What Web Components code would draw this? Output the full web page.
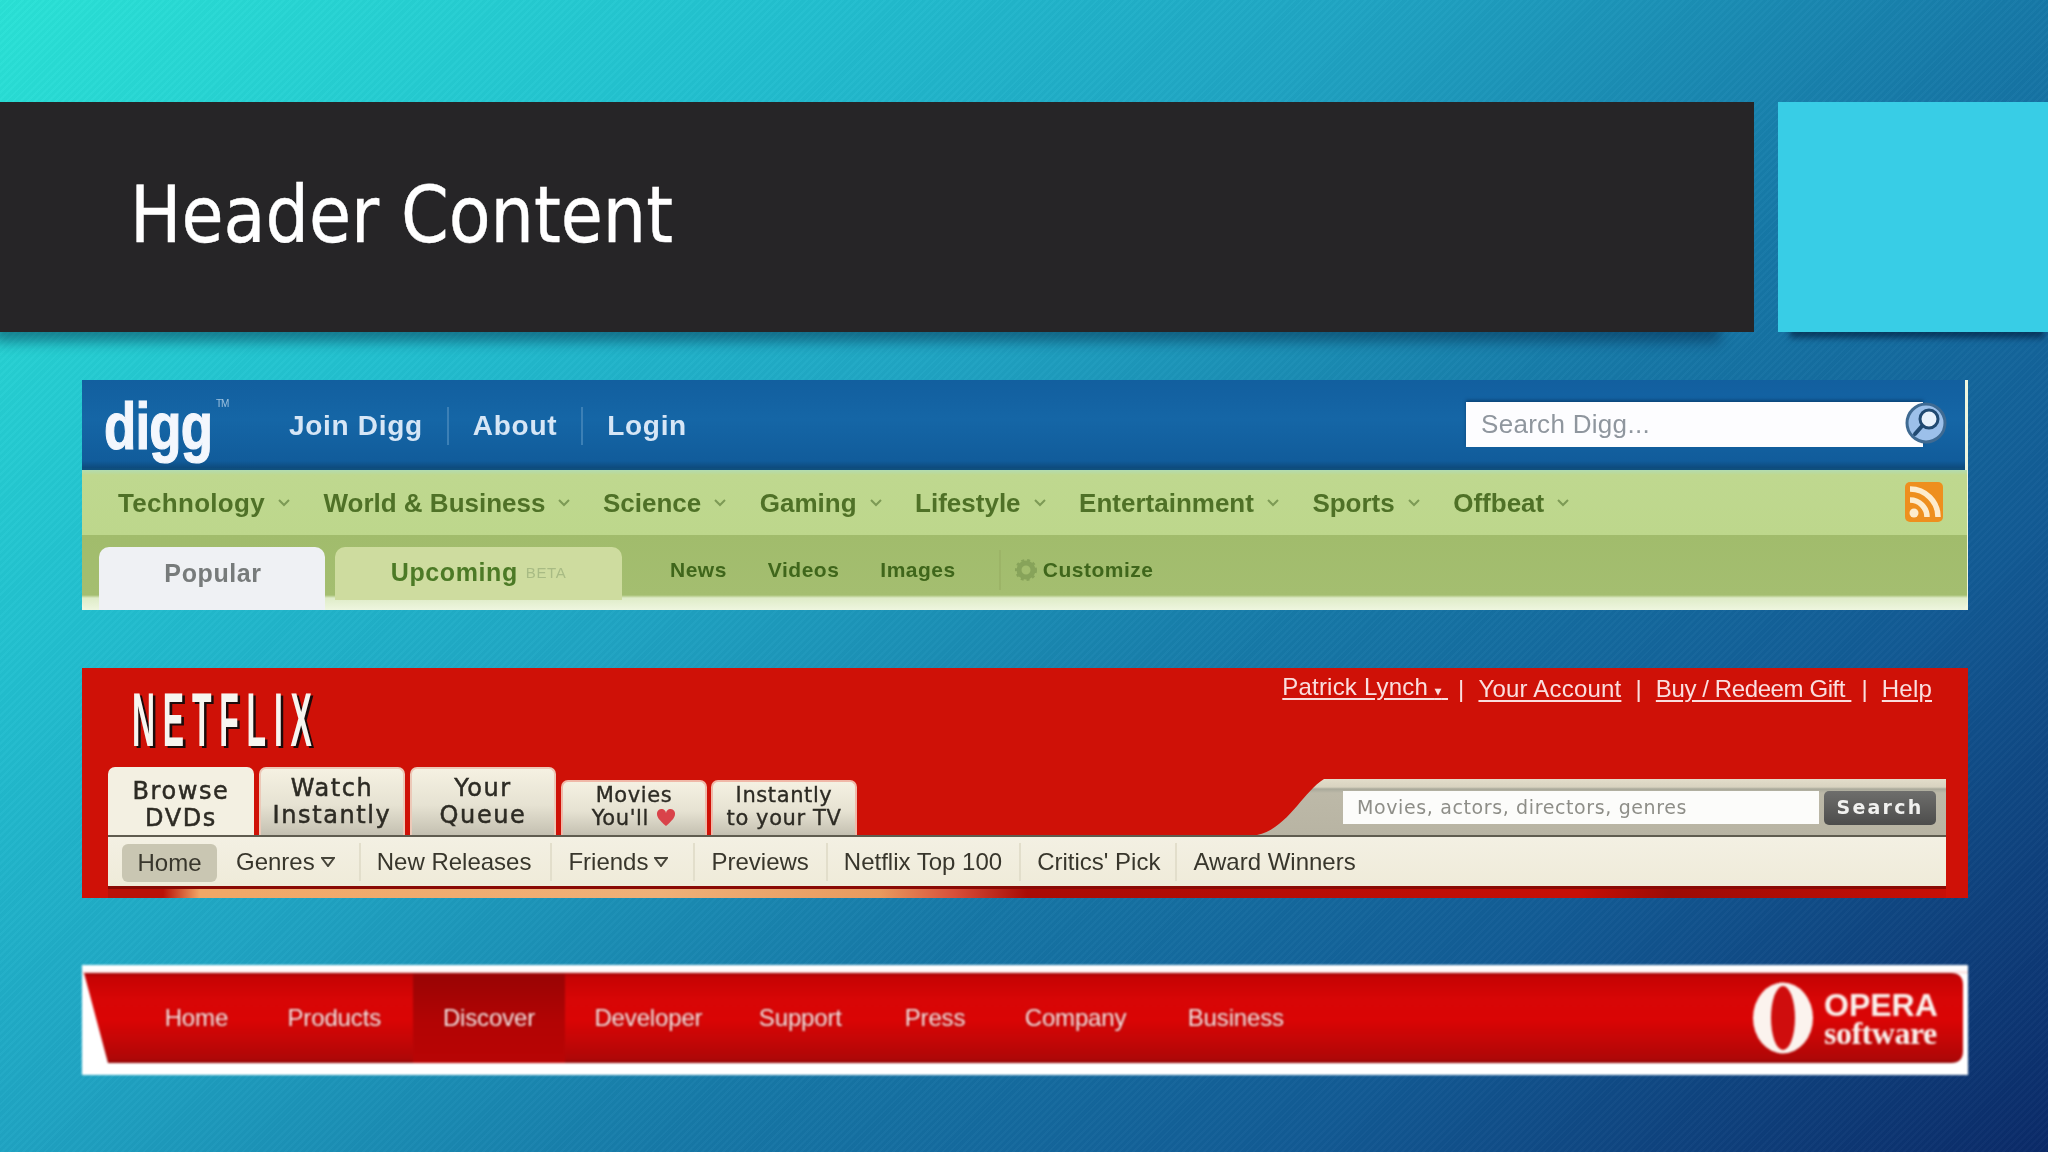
<!DOCTYPE html>
<html><head><meta charset="utf-8"><title>Header Content</title>
<style>
html,body{margin:0;padding:0;width:2048px;height:1152px;overflow:hidden}
body{font-family:"Liberation Sans",sans-serif;background:
 repeating-linear-gradient(135deg,rgba(255,255,255,.02) 0 2px,rgba(0,0,0,.015) 2px 5px),
 linear-gradient(140deg,#2ae2d6 0%,#22bfcf 24%,#1fa4c3 40%,#1678a7 60%,#125a94 78%,#0b2a68 100%)}
slide-page{display:block}
</style></head>
<body>
<slide-page>
  <slide-header>Header Content</slide-header>
  <digg-bar></digg-bar>
  <netflix-bar></netflix-bar>
  <opera-bar></opera-bar>
</slide-page>
<script>
function def(name,css,html){
  customElements.define(name,class extends HTMLElement{
    constructor(){super();const r=this.attachShadow({mode:'open'});r.innerHTML='<style>'+css+'</style>'+html;}
  });
}
const chev='<svg width="14" height="8" viewBox="0 0 14 8"><path d="M2 1l5 5 5-5" fill="none" stroke="#7d9a55" stroke-width="2"/></svg>';
const tri='<svg width="14" height="10" viewBox="0 0 14 10"><path d="M1 1h12L7 9Z" fill="none" stroke="#47453a" stroke-width="2"/></svg>';
def('slide-page',`:host{display:flex;flex-direction:column;padding-top:102px;width:2048px}`,`<slot></slot>`);

def('slide-header',`
:host{display:flex;gap:24px;height:230px}
.t{width:1754px;box-sizing:border-box;background:#262527;color:#fff;padding-left:130px;display:flex;align-items:center;
 box-shadow:-20px 24px 12px -14px rgba(0,25,55,.42);padding-bottom:5px}
h1{margin:0;font:400 78px/1 "DejaVu Sans",sans-serif;font-stretch:condensed;transform-origin:left center;transform:scaleX(.975);white-space:nowrap;-webkit-text-stroke:.4px #fff}
.c{flex:1;background:#38cde6;box-shadow:4px 14px 6px -8px rgba(0,25,55,.6)}
`,`<div class="t"><h1><slot></slot></h1></div><div class="c"></div>`);

def('digg-bar',`
:host{display:block;width:1886px;height:230px;margin:48px 0 0 82px;background:#eef6df;filter:blur(.7px);font-family:"Liberation Sans",sans-serif;font-weight:700}
.a{height:90px;margin-right:3px;background:linear-gradient(#125f9f,#1566a6 45%,#115c9b 92%,#0d4a7c);display:flex;align-items:center;padding-left:22px;box-sizing:border-box;border-bottom:2px solid #0f4f7d}
.logo{width:108px;height:70px;color:#f3f7fd;font-size:66px;line-height:70px;letter-spacing:-1px;position:relative;padding-top:2px;box-sizing:border-box}
.logo span{display:inline-block;transform:scale(.8,1);transform-origin:left center;-webkit-text-stroke:1.2px #f3f7fd}
.logo sup{position:absolute;left:112px;top:10px;font-size:10px;font-weight:400;color:#9cc0de;line-height:1}
nav{display:flex;margin-left:77px;align-items:center;padding-top:3px}
nav a{color:#d6e6f6;font-size:28px;padding:0 24px;border-left:2px solid #3c80b6;line-height:38px;letter-spacing:.7px;white-space:nowrap}
nav a:first-child{border:0;padding-left:0}
.s{margin-left:auto;margin-right:42px;width:457px;height:45px;background:#fdfdff;position:relative;display:flex;align-items:center;box-sizing:border-box;padding-left:15px;box-shadow:0 -2px 3px rgba(0,40,80,.5)}
.s span{font-size:26px;font-weight:400;color:#8f969e;letter-spacing:.3px}
.s svg{position:absolute;right:-24px;top:-1px}
.b{height:65px;margin-right:1px;background:linear-gradient(#b3dcb0 0,#bfd88f 5px,#bdd78c);display:flex;align-items:center;padding:1px 24px 0 36px;gap:32.500px;box-sizing:border-box;color:#4f7127;font-size:26px}
.b span{display:flex;align-items:center;gap:12px;white-space:nowrap}
.b svg.rss{margin-left:auto;margin-top:-3px}
.c{height:75px;margin-right:1px;background:linear-gradient(#a1bc6c,#a4be70 60px,#dfecc8 63px,#eef6df);display:flex;padding-left:17px;border-radius:0 0 8px 8px;box-sizing:border-box}
.tab{margin-top:12px;display:flex;align-items:center;justify-content:center;border-radius:10px 10px 0 0;font-size:25px;box-sizing:border-box;letter-spacing:.6px}
.p{width:226px;background:#eff1f4;color:#777b7b;padding:0 0 11px 2px}
.u{width:287px;margin-left:10px;margin-bottom:10px;background:#cedc9f;color:#4c7a26;gap:8px;padding-bottom:3px}
.u small{font-size:15px;color:#a8bb84;letter-spacing:.6px;font-weight:400}
.l{display:flex;align-items:center;font-size:21px;color:#3f661b;height:65px;gap:41px;margin-left:48px;letter-spacing:.5px;padding-top:4px;box-sizing:border-box}
.l .g{display:flex;align-items:center;gap:6px;margin-left:2px;padding-left:14px;border-left:2px solid #9cb467;height:40px}
`,`
<div class="a">
  <div class="logo"><span>digg</span><sup>TM</sup></div>
  <nav><a>Join Digg</a><a>About</a><a>Login</a></nav>
  <div class="s"><span>Search Digg...</span>
    <svg width="42" height="44" viewBox="0 0 42 44"><circle cx="21" cy="22" r="19" fill="#9cc0ea" stroke="#3f6a92" stroke-width="3"/><circle cx="24" cy="18" r="9" fill="#e9f2fc" stroke="#214a72" stroke-width="3"/><path d="M17 25 10 33" stroke="#214a72" stroke-width="4" stroke-linecap="round"/></svg>
  </div>
</div>
<div class="b">
  <span style="letter-spacing:.3px">Technology${chev}</span>
  <span style="margin-right:-1px">World &amp; Business${chev}</span>
  <span>Science${chev}</span>
  <span>Gaming${chev}</span>
  <span>Lifestyle${chev}</span>
  <span>Entertainment${chev}</span>
  <span>Sports${chev}</span>
  <span>Offbeat${chev}</span>
  <svg class="rss" width="38" height="40" viewBox="0 0 38 40"><rect width="38" height="40" rx="5" fill="#ee8f1e"/><circle cx="9" cy="31" r="4.500" fill="#fdeccd"/><path d="M5 18a17 17 0 0 1 17 17M5 7a28 28 0 0 1 28 28" fill="none" stroke="#fdeccd" stroke-width="5.500"/></svg>
</div>
<div class="c">
  <div class="tab p">Popular</div>
  <div class="tab u">Upcoming <small>BETA</small></div>
  <div class="l"><span>News</span><span>Videos</span><span>Images</span>
    <span class="g"><svg width="22" height="22" viewBox="0 0 22 22"><circle cx="11" cy="11" r="7" fill="none" stroke="#87a35a" stroke-width="5"/><circle cx="11" cy="11" r="10" fill="none" stroke="#87a35a" stroke-width="2" stroke-dasharray="3 3"/></svg>Customize</span></div>
</div>
`);

def('netflix-bar',`
:host{display:block;width:1886px;height:230px;margin:58px 0 0 82px;background:#cf1107;filter:blur(.7px);font-family:"Liberation Sans",sans-serif;position:relative}
.top{height:99px;display:flex;justify-content:space-between;align-items:flex-start;padding:0 36px 0 50px;box-sizing:border-box}
.logo{margin-top:25px;width:185px;height:54px;color:#f7f5f0;font-size:76px;line-height:54px;font-weight:700;white-space:nowrap;text-shadow:6px 2px 0 #1c0b0b;letter-spacing:18.600px;transform:scaleX(.42);transform-origin:left top}
.links{display:flex;align-items:center;color:#fadede;font-size:24px;letter-spacing:.2px;margin-top:4px;line-height:30px;white-space:nowrap}
.links a{text-decoration:underline;text-underline-offset:3px}
.links a.n{letter-spacing:-.4px}
.links i{font-style:normal;margin:0 14px 0 10px}
.links b{font-size:12px}
.row{height:68px;display:flex;padding:0 22px 0 26px;align-items:flex-end;font-family:"DejaVu Sans",sans-serif;color:#2d2b24}
.tab{box-sizing:border-box;text-align:center;border-radius:7px 7px 0 0;border:2px solid #ecc9b8;border-bottom:0;background:linear-gradient(#f5f1e2,#e6e2d2 55%,#c4c0b1);white-space:nowrap}
.big{width:146px;height:68px;font-size:24px;line-height:27px;padding-top:6px;margin-right:5px;letter-spacing:1.6px;-webkit-text-stroke:.5px #2d2b24}
.big.on{background:#f3f0e2;height:72px;margin-bottom:-4px;border-color:#f3f0e2;position:relative;padding-top:9px}
.sm{width:146px;height:55px;font-size:21px;line-height:23px;padding-top:2px;margin-right:4px;letter-spacing:.6px;border-color:#f0b8a8;-webkit-text-stroke:.35px #2d2b24}
.sm svg{vertical-align:-2px}
.search{margin-left:auto;width:689px;height:56px;background:linear-gradient(#e2ddca,#d8d3c0 8px,#a9a99a 10px,#bdb9a8 14px,#b8b4a3);clip-path:path('M0 56C30 50 45 14 67 0H689V56Z');display:flex;padding:12px 10px 0 86px;box-sizing:border-box;gap:5px;align-items:flex-start}
.in{width:476px;height:33px;background:#fcfcfa;color:#8e8e88;font-size:19px;line-height:33px;padding-left:14px;box-sizing:border-box;letter-spacing:.62px;white-space:nowrap;overflow:hidden}
.go{width:112px;height:34px;border-radius:5px;background:linear-gradient(#6e6e6c,#4d4d4c);color:#f1f1ef;font-weight:700;font-size:19px;line-height:33px;text-align:center;letter-spacing:2.200px}
.nav{margin:0 22px 0 26px;height:51px;box-sizing:border-box;border-top:2px solid #5f5c4f;background:linear-gradient(#f3f0e3,#efebd9);display:flex;align-items:center;padding-left:14px;color:#38362c;font-size:24px;box-shadow:0 3px 0 #8a0a04;white-space:nowrap;position:relative}
.nav .h{width:95px;height:38px;border-radius:6px;background:#c9c6b2;line-height:38px;text-align:center;margin-right:19px;margin-top:2px}
.nav span{display:flex;align-items:center;gap:6px;padding:0 17px 0 16px;height:38px;border-left:2px solid #e2decb}
.nav span.f{border:0;padding:0 24px 0 0}
.strip{position:absolute;left:26px;right:22px;bottom:0;height:9px;background:linear-gradient(90deg,#b91107 0,#b91107 3%,#f1a766 5%,#efb078 30%,#e89a5e 42%,#d8503a 46%,#a90b05 50%,#c70f06 80%,#9c0b05 85%,#c80f06 100%)}
`,`
<div class="top">
  <div class="logo">NETFLIX</div>
  <div class="links"><a>Patrick Lynch <b>▾</b>&nbsp;</a><i>|</i><a>Your Account</a><i style="margin-left:14px">|</i><a class="n">Buy / Redeem Gift&nbsp;</a><i>|</i><a>Help</a></div>
</div>
<div class="row">
  <div class="tab big on">Browse<br>DVDs</div>
  <div class="tab big">Watch<br>Instantly</div>
  <div class="tab big">Your<br>Queue</div>
  <div class="tab sm">Movies<br>You'll <svg width="20" height="18" viewBox="0 0 20 18"><path d="M10 17C3 11 1 8 1 5a4.500 4.500 0 0 1 9-1 4.500 4.500 0 0 1 9 1c0 3-2 6-9 12Z" fill="#d9434a"/></svg></div>
  <div class="tab sm">Instantly<br>to your TV</div>
  <div class="search"><div class="in">Movies, actors, directors, genres</div><div class="go">Search</div></div>
</div>
<div class="nav">
  <div class="h">Home</div>
  <span class="f">Genres${tri}</span>
  <span style="padding-right:19px">New Releases</span>
  <span style="padding-right:25px">Friends${tri}</span>
  <span>Previews</span><span>Netflix Top 100</span><span style="padding-right:15px">Critics' Pick</span><span>Award Winners</span>
</div>
<div class="strip"></div>
`);

def('opera-bar',`
:host{display:block;width:1886px;height:110px;margin:67px 0 0 82px;background:linear-gradient(#fff,#fff 5px,#fbd9d6 8px,#fff 9px);padding:8px 5px 12px 2px;box-sizing:border-box;filter:blur(.8px);font-family:"Liberation Sans",sans-serif}
.r{height:90px;clip-path:path('M0 0H1867Q1879 0 1879 12V78Q1879 90 1867 90H24Z');background:linear-gradient(#a20404 0,#c60404 4px,#d80606 30%,#da0505 52%,#c40606 75%,#ae0707 96%,#8e0606);display:flex;align-items:center;padding-left:51px;color:#fbe8e6;font-size:24px;letter-spacing:-.15px;white-space:nowrap}
.r span{padding:0 29.700px;line-height:90px;text-shadow:0 0 2px #700}
.r span.on{background:linear-gradient(#980404,#b30404 55%,#b80505);margin-left:2.500px}
.logo{margin-left:auto;display:flex;align-items:center;gap:11px;margin-right:27px;color:#fbf1ec;height:90px}
.w{display:flex;flex-direction:column;font-weight:700;line-height:1;width:112px}
.w b{font-size:32px;letter-spacing:0;line-height:30px;font-weight:700}
.w em{font:700 32px/27px "Liberation Serif",serif;letter-spacing:-.5px}
`,`
<div class="r">
  <span>Home</span><span>Products</span><span class="on">Discover</span><span style="margin-right:-3px">Developer</span><span style="margin-right:3.500px">Support</span><span>Press</span><span style="margin-right:2px">Company</span><span>Business</span>
  <div class="logo">
    <svg width="60" height="72" viewBox="0 0 60 72"><ellipse cx="30" cy="36" rx="30" ry="35.500" fill="#fbf3ee"/><ellipse cx="30" cy="36" rx="12" ry="32" fill="#cf0d0d"/></svg>
    <div class="w"><b>OPERA</b><em>software</em></div>
  </div>
</div>
`);
</script>
</body></html>
